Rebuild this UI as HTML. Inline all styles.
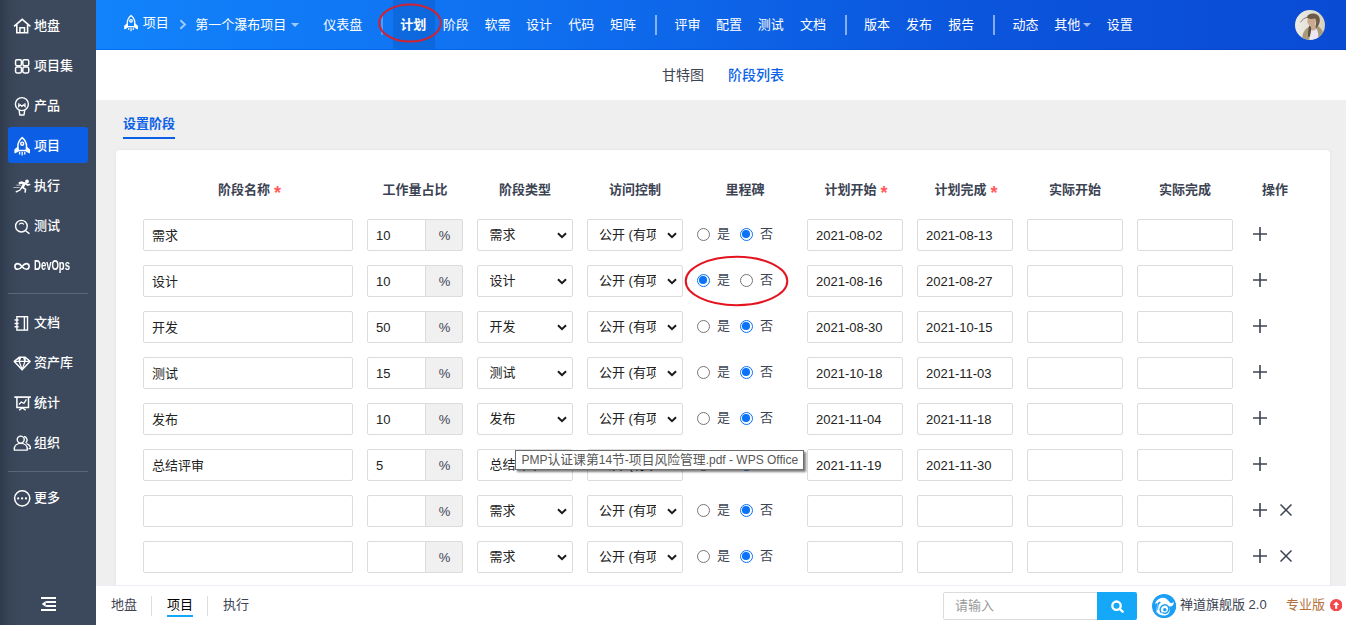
<!DOCTYPE html>
<html lang="zh-CN">
<head>
<meta charset="utf-8">
<title>设置阶段</title>
<style>
*{box-sizing:border-box;margin:0;padding:0}
html,body{width:1346px;height:625px;overflow:hidden;background:#efefef;font-family:"Liberation Sans","Noto Sans CJK SC",sans-serif;font-size:13px;color:#3c4353}
.abs{position:absolute}
#side{position:absolute;left:0;top:0;width:96px;height:625px;background:linear-gradient(90deg,#2f3a4c 0,#364256 7px,#3a475b 14px,#3c495d 22px,#3c495d 100%)}
.mi{position:absolute;left:8px;width:80px;height:36px;border-radius:3px;color:#fff;font-size:13px;line-height:38px;white-space:nowrap}
.mi svg{position:absolute;left:5px;top:9px;width:18px;height:20px}
.mi span{position:absolute;left:26px;top:0;font-weight:500}
.mi span.dv{font-size:14px;transform:scaleX(.68);transform-origin:0 50%;font-weight:bold;line-height:37px}
.mi.act{background:#0c5ee4}
.sdiv{position:absolute;left:8px;width:80px;height:1px;background:#5a6578}
#top{position:absolute;left:96px;top:0;width:1250px;height:50px;background:linear-gradient(90deg,#1283fb 0,#0f6fef 35%,#0b55dc 70%,#0a4bd4 100%)}
#top:after{content:"";position:absolute;left:0;bottom:0;width:100%;height:1px;background:linear-gradient(90deg,#0070f8 0,#0560e8 40%,#0540c8 100%)}
.ni{position:absolute;top:0;height:49px;line-height:49px;color:#fff;font-size:13px;white-space:nowrap}
.nd{position:absolute;top:15px;width:2px;height:20px;background:rgba(255,255,255,.5)}
.caret{position:absolute;top:23px;width:0;height:0;border:4px solid transparent;border-top-color:rgba(255,255,255,.6);border-bottom:none}
#sub{position:absolute;left:96px;top:50px;width:1250px;height:50px;background:#fff}
#sub span{position:absolute;top:0;line-height:50px;font-size:14px;white-space:nowrap}
.stitle{left:123px;top:114px;font-size:13px;font-weight:bold;color:#0b62e8;line-height:20px}
#panel{position:absolute;left:116px;top:150px;width:1214px;height:500px;background:#fff;border-radius:4px;box-shadow:0 0 3px rgba(0,0,0,.07)}
.th{position:absolute;top:30px;height:20px;line-height:20px;font-weight:bold;font-size:13px;color:#3c4353;text-align:center;white-space:nowrap;transform:translateX(-50%)}
.th i{color:#ff5d5d;font-style:normal;font-weight:bold;margin-left:4px;font-size:18px;line-height:0;position:relative;top:5px;font-family:"Liberation Sans",sans-serif}
.row{position:absolute;left:0;width:1214px;height:32px}
.in{position:absolute;top:0;height:32px;border:1px solid #dcdcdc;border-radius:2px;background:#fff;font-size:13px;line-height:32px;padding-left:8px;color:#222;white-space:nowrap;overflow:hidden}
.ad{position:absolute;top:0;left:309px;width:38px;height:32px;border:1px solid #dcdcdc;border-radius:0 2px 2px 0;background:#f0f0f0;text-align:center;line-height:32px;color:#3c4353;padding-left:1px}
.sel{line-height:30px!important}
.sel svg{position:absolute;right:5px;top:12px}
.clip{display:inline-block;width:57px;overflow:hidden;vertical-align:top;height:30px}
.rd{position:absolute;top:9px;width:13px;height:13px;border-radius:50%;border:1px solid #767676;background:#fff}
.rd.on{border:1.5px solid #0b73f8}
.rd.on:after{content:"";position:absolute;left:1.200px;top:1.200px;width:7.600px;height:7.600px;border-radius:50%;background:#0b73f8}
.rl{position:absolute;top:0;line-height:30px;font-size:13px;color:#3c4353}
.tip{left:515px;top:450px;width:289px;height:20px;border:1px solid #6e6e6e;background:#fff;box-shadow:2px 2px 2px rgba(0,0,0,.5);font-size:12px;line-height:17px;padding-left:5.500px;color:#575757;white-space:nowrap}
.tip b{font-weight:normal;font-size:12.800px}
#foot{position:absolute;left:96px;top:585px;width:1250px;height:40px;background:#fff;border-top:1px solid #eceef6}
.fi{position:absolute;top:0;line-height:38px;font-size:13px;color:#3c4353;white-space:nowrap}
.fd{position:absolute;top:10px;width:1px;height:20px;background:#ddd}
.sbox{left:847px;top:6px;width:155px;height:28px;border:1px solid #dcdcdc;border-radius:2px 0 0 2px;line-height:26px;padding-left:11px;color:#999;font-size:13px}
.sbtn{left:1001px;top:6px;width:40px;height:28px;background:#16a8f8;border-radius:0 2px 2px 0;display:flex;align-items:center;justify-content:center}
</style>
</head>
<body>
<div id="side">
<div class="mi" style="top:7px"><svg viewBox="0 0 18 20"><g fill="none" stroke="#fff" stroke-width="1.600" stroke-linejoin="miter"><path d="M1 10.400 9.200 3.400l8.200 7"/><path d="M3.800 8.600v8.100h10.800V8.600"/><path d="M6.900 16.700v-5h4.600v5" stroke-width="1.500"/></g></svg><span class="ml">地盘</span></div>
<div class="mi" style="top:47px"><svg viewBox="0 0 18 20"><g fill="none" stroke="#fff" stroke-width="1.500"><rect x="2.550" y="3.750" width="5.900" height="5.900" rx="1.400"/><rect x="9.850" y="3.750" width="5.900" height="5.900" rx="1.400"/><rect x="2.550" y="11.050" width="5.900" height="5.900" rx="1.400"/><rect x="9.850" y="11.050" width="5.900" height="5.900" rx="1.400"/></g></svg><span class="ml">项目集</span></div>
<div class="mi" style="top:87px"><svg viewBox="0 0 18 20"><g fill="none" stroke="#fff" stroke-width="1.400" stroke-linejoin="round"><circle cx="8.900" cy="8.100" r="6.500"/><path d="M6.100 14.200 6.800 19h4.200l.7-4.800"/><path d="M5.800 7.200v3.200l1.550-1.500 1.550 1.500 1.550-1.500 1.550 1.500V7.200" stroke-width="1.300" stroke-linejoin="miter"/></g></svg><span class="ml">产品</span></div>
<div class="mi act" style="top:127px"><svg viewBox="0 0 18 20"><g fill="none" stroke="#fff" stroke-width="1.500" stroke-linejoin="round"><path d="M9.200 1.600C6.400 4 4.900 6.800 4.900 10v4.400h8.600V10c0-3.200-1.500-6-4.300-8.400z"/><circle cx="9.200" cy="7.800" r="1.500" stroke-width="1.400"/><path d="M4.900 11.200 2 13.600v3.200l2.900-1.600zM13.500 11.200l2.900 2.400v3.200l-2.900-1.600z" fill="#fff" stroke-width="1.200"/><path d="M6.600 15.800v2.600M9.200 15.800v3.800M11.800 15.800v2.600" stroke-width="1.300"/></g></svg><span class="ml">项目</span></div>
<div class="mi" style="top:167px"><svg viewBox="0 0 18 20"><g fill="#fff" stroke="none"><circle cx="14" cy="5.500" r="1.900"/><path d="M5.600 6.200 8.400 5.300l4.200 1.200 2.200 1.600 2.300-.3.400 1.200-3 .9-2-1.300-1.600 2.700 2.500 1.700-.6 3.800-1.500-.2.400-3-2.600-1.300-1.600 2.300L3 16.700l-.5-1.400 4-1.600 3.100-5.400-1.500-.5-2.200 1z"/><path d="M3.200 8.800h5.200v.8H3.200zM.4 10.900h6.400v.8H.4z" opacity=".8"/></g></svg><span class="ml">执行</span></div>
<div class="mi" style="top:207px"><svg viewBox="0 0 18 20"><g fill="none" stroke="#fff" stroke-width="1.400" stroke-linecap="round"><circle cx="8.400" cy="10.200" r="5.800"/><path d="M12.600 14.800 16 17.400"/><path d="M6.400 8.100c1.200-1.100 3-1.100 4.200 0" stroke-width="1.100"/></g></svg><span class="ml">测试</span></div>
<div class="mi" style="top:247px"><svg viewBox="0 0 18 20"><path d="M9 10.400C7.400 8.400 6.200 7.600 4.700 7.600a2.800 2.800 0 0 0 0 5.600C6.200 13.200 7.400 12.400 9 10.400s2.800-2.800 4.300-2.800a2.800 2.800 0 0 1 0 5.600C11.800 13.200 10.600 12.400 9 10.400z" fill="none" stroke="#fff" stroke-width="1.600"/></svg><span class="ml dv">DevOps</span></div>
<div class="mi" style="top:304px"><svg viewBox="0 0 18 20"><g fill="none" stroke="#fff" stroke-width="1.400"><rect x="3.900" y="3.700" width="10.600" height="13.400"/><path d="M11.400 3.700v13.400"/><path d="M1.600 7h4M1.600 10.400h4M1.600 13.800h4" stroke-width="1.500"/></g></svg><span class="ml">文档</span></div>
<div class="mi" style="top:344px"><svg viewBox="0 0 18 20"><g fill="none" stroke="#fff" stroke-width="1.300" stroke-linejoin="round"><path d="M6.200 4.300h6L17 8.400 9.100 16.800 1.300 8.400z" stroke-width="1.500"/><path d="M1.300 8.400H17M6.200 8.400 9.100 16.600 12 8.400M6.200 8.400 7.600 4.300M12 8.400 10.600 4.300M6.200 8.400 6.200 4.300M12 8.400 12.200 4.300"/></g></svg><span class="ml">资产库</span></div>
<div class="mi" style="top:384px"><svg viewBox="0 0 18 20"><g fill="none" stroke="#fff" stroke-width="1.500" stroke-linejoin="miter"><path d="M1.300 4.100h16.600" stroke-width="1.700"/><path d="M3.900 4.100v10.300h11.600V4.100"/><path d="M6.200 17.200 9.300 14.600l3.400 2.600" stroke-width="1.400"/><path d="M6 11.500 8.300 9l2.600 1.300 2.500-4" stroke-width="1.300"/></g></svg><span class="ml">统计</span></div>
<div class="mi" style="top:424px"><svg viewBox="0 0 18 20"><g fill="none" stroke="#fff" stroke-width="1.400"><circle cx="7.700" cy="6.600" r="3.500"/><path d="M1.300 17.100v-1c0-3.400 2.600-5.700 6.500-5.700s6.500 2.300 6.500 5.700v1z" stroke-linejoin="round"/><path d="M11 3.500a3.500 3.500 0 0 1 1.600 6.300M13.300 10.600c2.600.8 4.200 2.600 4.200 5h-2"/></g></svg><span class="ml">组织</span></div>
<div class="mi" style="top:479px"><svg viewBox="0 0 18 20"><g><circle cx="9.200" cy="10.300" r="7.600" fill="none" stroke="#fff" stroke-width="1.500"/><circle cx="5.200" cy="10.400" r="1.150" fill="#fff"/><circle cx="9.100" cy="10.400" r="1.150" fill="#fff"/><circle cx="13" cy="10.400" r="1.150" fill="#fff"/></g></svg><span class="ml">更多</span></div>
<div class="sdiv" style="top:293px"></div><div class="sdiv" style="top:471px"></div>
<svg class="abs" style="left:40.500px;top:597.100px" width="15.200" height="14" viewBox="0 0 16 14" preserveAspectRatio="none"><path d="M0 0h16v1.900H0zM5.400 4h10.600v1.900H5.400zM5.400 8h10.600v1.900H5.400zM0 12h16v1.900H0z" fill="#fff"/><path d="M5 4v6L.8 7z" fill="#fff"/></svg>
</div>
<div id="top">
<svg class="abs" style="left:27.300px;top:14.100px" width="15.750" height="17.500" viewBox="0 0 18 20"><g fill="none" stroke="#fff" stroke-width="1.500" stroke-linejoin="round"><path d="M9.200 1.600C6.400 4 4.900 6.800 4.900 10v4.400h8.600V10c0-3.200-1.500-6-4.300-8.400z"/><circle cx="9.200" cy="7.800" r="1.500" stroke-width="1.400"/><path d="M4.900 11.200 2 13.600v3.200l2.900-1.600zM13.500 11.200l2.900 2.400v3.200l-2.900-1.600z" fill="#fff" stroke-width="1.200"/><path d="M6.600 15.800v2.600M9.200 15.800v3.800M11.800 15.800v2.600" stroke-width="1.300"/></g></svg>
<span class="ni" style="left:46.69999999999999px;line-height:46px">项目</span>
<svg class="abs" style="left:83px;top:18.800px" width="8" height="11" viewBox="0 0 8 11"><path d="M1.400 1.200l4.600 4.300-4.600 4.300" fill="none" stroke="rgba(255,255,255,.6)" stroke-width="1.900"/></svg>
<span class="ni" style="left:99.30000000000001px">第一个瀑布项目</span>
<span class="caret" style="left:195px"></span>
<span class="ni" style="left:227.3px">仪表盘</span>
<span class="nd" style="left:284.500px;opacity:.55"></span>
<div class="abs" style="left:297px;top:0;width:41.500px;height:50px;background:rgba(0,0,40,.1)"></div>
<span class="ni" style="left:304.2px;font-weight:bold">计划</span>
<span class="ni" style="left:346.7px">阶段</span>
<span class="ni" style="left:388.4px">软需</span>
<span class="ni" style="left:430.1px">设计</span>
<span class="ni" style="left:472.20000000000005px">代码</span>
<span class="ni" style="left:513.9px">矩阵</span>
<span class="ni" style="left:578.4px">评审</span>
<span class="ni" style="left:620.1px">配置</span>
<span class="ni" style="left:661.8px">测试</span>
<span class="ni" style="left:703.9px">文档</span>
<span class="ni" style="left:768.1px">版本</span>
<span class="ni" style="left:809.9px">发布</span>
<span class="ni" style="left:852.3px">报告</span>
<span class="ni" style="left:916.6px">动态</span>
<span class="ni" style="left:958.3px">其他</span>
<span class="ni" style="left:1010.8px">设置</span>
<span class="caret" style="left:986.500px"></span>
<span class="nd" style="left:559px"></span>
<span class="nd" style="left:749px"></span>
<span class="nd" style="left:897px"></span>
<svg class="abs" style="left:1199px;top:9.800px" width="30" height="30" viewBox="0 0 30 30"><defs><clipPath id="av"><circle cx="15" cy="15" r="15"/></clipPath><linearGradient id="avg" x1="0" x2="1" y1="0" y2="0"><stop offset="0" stop-color="#ecece4"/><stop offset=".55" stop-color="#e2e1d8"/><stop offset="1" stop-color="#d8cfbc"/></linearGradient><filter id="avb" x="-10%" y="-10%" width="120%" height="120%"><feGaussianBlur stdDeviation=".55"/></filter></defs><g clip-path="url(#av)"><rect width="30" height="30" fill="url(#avg)"/><g filter="url(#avb)"><path d="M7 30c0-6 2.500-11 6.500-13l4-1.500 5 .5c4 1.500 6.500 6 6.500 14z" fill="#a99b7a"/><path d="M14.500 19.500c1.500-1.500 5.500-2 7.500 0 1.500 3 1.500 7 1 10.500h-8.500c-.5-4-.5-8 0-10.500z" fill="#ece7f3"/><path d="M15.500 14.500h4.500l.5 5c-1.500 1.200-3.500 1.200-5 0z" fill="#c9a98f"/><path d="M12.500 9c.5-3 3.500-4.500 6.500-4 2 .5 2.500 3 2 6-.5 3-2 5-4.500 5-2.500-.2-3.800-2-4.200-4.200z" fill="#caa98e"/><path d="M11.800 7.500C12.500 4.500 16 3 20 3.800c3.500.8 5 3.500 4.800 7-.2 3-1.500 5.500-3.300 7.200-.8-1-1-2.500-.6-4 .6-2.200.4-4.200-.9-5.700-1.700 1.200-5 1.200-8.200-.8z" fill="#6a5a48"/><path d="M14.200 15.500c1 .8 2 1.500 2 3 0 3-1 6-1.400 8.500l-1.800-.5c0-3.500.2-7.500 1.200-11z" fill="#5e5040"/><path d="M12.200 7.300C9.500 7.800 7 9.800 5.600 12.300" fill="none" stroke="#5a5048" stroke-width=".7"/></g></g></svg>
<svg class="abs" style="left:282px;top:0px;overflow:visible" width="66" height="44" viewBox="0 0 66 44"><ellipse cx="32" cy="23" rx="30.800" ry="18.500" fill="none" stroke="#d3222f" stroke-width="2"/></svg>
</div>
<div id="sub"><span style="left:566px;color:#3c4353">甘特图</span><span style="left:632px;color:#0b62e8;font-weight:500">阶段列表</span></div>
<div class="abs stitle">设置阶段</div>
<div class="abs" style="left:123px;top:137px;width:52px;height:2px;background:#0b5fe6"></div>
<div id="panel">
<div class="th" style="left:133.5px">阶段名称<i>*</i></div><div class="th" style="left:299px">工作量占比</div><div class="th" style="left:409px">阶段类型</div><div class="th" style="left:519px">访问控制</div><div class="th" style="left:629px">里程碑</div><div class="th" style="left:740px">计划开始<i>*</i></div><div class="th" style="left:850px">计划完成<i>*</i></div><div class="th" style="left:959px">实际开始</div><div class="th" style="left:1069px">实际完成</div><div class="th" style="left:1159px">操作</div>
<div class="row" style="top:69px"><div class="in" style="left:27px;width:210px">需求</div><div class="in" style="left:251px;width:59px;border-radius:2px 0 0 2px">10</div><div class="ad">%</div><div class="in sel" style="left:361px;width:96px;padding-left:11.500px">需求<svg width="10" height="7" viewBox="0 0 10 7"><path d="M1 1.200l4 4 4-4" fill="none" stroke="#1a1a1a" stroke-width="2"/></svg></div><div class="in sel" style="left:471px;width:96px;padding-left:11px"><span class="clip">公开 (有项目视图权限即可访问)</span><svg width="10" height="7" viewBox="0 0 10 7"><path d="M1 1.200l4 4 4-4" fill="none" stroke="#1a1a1a" stroke-width="2"/></svg></div><span class="rd " style="left:581px"></span><span class="rl" style="left:601px">是</span><span class="rd on" style="left:624px"></span><span class="rl" style="left:644px">否</span><div class="in" style="left:691px;width:96px">2021-08-02</div><div class="in" style="left:801px;width:96px">2021-08-13</div><div class="in" style="left:911px;width:96px"></div><div class="in" style="left:1021px;width:96px"></div><svg class="abs" style="left:1137px;top:8px" width="14" height="14" viewBox="0 0 14 14"><path d="M7 0v14M0 7h14" stroke="#3c4353" stroke-width="1.600"/></svg></div>
<div class="row" style="top:115px"><div class="in" style="left:27px;width:210px">设计</div><div class="in" style="left:251px;width:59px;border-radius:2px 0 0 2px">10</div><div class="ad">%</div><div class="in sel" style="left:361px;width:96px;padding-left:11.500px">设计<svg width="10" height="7" viewBox="0 0 10 7"><path d="M1 1.200l4 4 4-4" fill="none" stroke="#1a1a1a" stroke-width="2"/></svg></div><div class="in sel" style="left:471px;width:96px;padding-left:11px"><span class="clip">公开 (有项目视图权限即可访问)</span><svg width="10" height="7" viewBox="0 0 10 7"><path d="M1 1.200l4 4 4-4" fill="none" stroke="#1a1a1a" stroke-width="2"/></svg></div><span class="rd on" style="left:581px"></span><span class="rl" style="left:601px">是</span><span class="rd " style="left:624px"></span><span class="rl" style="left:644px">否</span><div class="in" style="left:691px;width:96px">2021-08-16</div><div class="in" style="left:801px;width:96px">2021-08-27</div><div class="in" style="left:911px;width:96px"></div><div class="in" style="left:1021px;width:96px"></div><svg class="abs" style="left:1137px;top:8px" width="14" height="14" viewBox="0 0 14 14"><path d="M7 0v14M0 7h14" stroke="#3c4353" stroke-width="1.600"/></svg></div>
<div class="row" style="top:161px"><div class="in" style="left:27px;width:210px">开发</div><div class="in" style="left:251px;width:59px;border-radius:2px 0 0 2px">50</div><div class="ad">%</div><div class="in sel" style="left:361px;width:96px;padding-left:11.500px">开发<svg width="10" height="7" viewBox="0 0 10 7"><path d="M1 1.200l4 4 4-4" fill="none" stroke="#1a1a1a" stroke-width="2"/></svg></div><div class="in sel" style="left:471px;width:96px;padding-left:11px"><span class="clip">公开 (有项目视图权限即可访问)</span><svg width="10" height="7" viewBox="0 0 10 7"><path d="M1 1.200l4 4 4-4" fill="none" stroke="#1a1a1a" stroke-width="2"/></svg></div><span class="rd " style="left:581px"></span><span class="rl" style="left:601px">是</span><span class="rd on" style="left:624px"></span><span class="rl" style="left:644px">否</span><div class="in" style="left:691px;width:96px">2021-08-30</div><div class="in" style="left:801px;width:96px">2021-10-15</div><div class="in" style="left:911px;width:96px"></div><div class="in" style="left:1021px;width:96px"></div><svg class="abs" style="left:1137px;top:8px" width="14" height="14" viewBox="0 0 14 14"><path d="M7 0v14M0 7h14" stroke="#3c4353" stroke-width="1.600"/></svg></div>
<div class="row" style="top:207px"><div class="in" style="left:27px;width:210px">测试</div><div class="in" style="left:251px;width:59px;border-radius:2px 0 0 2px">15</div><div class="ad">%</div><div class="in sel" style="left:361px;width:96px;padding-left:11.500px">测试<svg width="10" height="7" viewBox="0 0 10 7"><path d="M1 1.200l4 4 4-4" fill="none" stroke="#1a1a1a" stroke-width="2"/></svg></div><div class="in sel" style="left:471px;width:96px;padding-left:11px"><span class="clip">公开 (有项目视图权限即可访问)</span><svg width="10" height="7" viewBox="0 0 10 7"><path d="M1 1.200l4 4 4-4" fill="none" stroke="#1a1a1a" stroke-width="2"/></svg></div><span class="rd " style="left:581px"></span><span class="rl" style="left:601px">是</span><span class="rd on" style="left:624px"></span><span class="rl" style="left:644px">否</span><div class="in" style="left:691px;width:96px">2021-10-18</div><div class="in" style="left:801px;width:96px">2021-11-03</div><div class="in" style="left:911px;width:96px"></div><div class="in" style="left:1021px;width:96px"></div><svg class="abs" style="left:1137px;top:8px" width="14" height="14" viewBox="0 0 14 14"><path d="M7 0v14M0 7h14" stroke="#3c4353" stroke-width="1.600"/></svg></div>
<div class="row" style="top:253px"><div class="in" style="left:27px;width:210px">发布</div><div class="in" style="left:251px;width:59px;border-radius:2px 0 0 2px">10</div><div class="ad">%</div><div class="in sel" style="left:361px;width:96px;padding-left:11.500px">发布<svg width="10" height="7" viewBox="0 0 10 7"><path d="M1 1.200l4 4 4-4" fill="none" stroke="#1a1a1a" stroke-width="2"/></svg></div><div class="in sel" style="left:471px;width:96px;padding-left:11px"><span class="clip">公开 (有项目视图权限即可访问)</span><svg width="10" height="7" viewBox="0 0 10 7"><path d="M1 1.200l4 4 4-4" fill="none" stroke="#1a1a1a" stroke-width="2"/></svg></div><span class="rd " style="left:581px"></span><span class="rl" style="left:601px">是</span><span class="rd on" style="left:624px"></span><span class="rl" style="left:644px">否</span><div class="in" style="left:691px;width:96px">2021-11-04</div><div class="in" style="left:801px;width:96px">2021-11-18</div><div class="in" style="left:911px;width:96px"></div><div class="in" style="left:1021px;width:96px"></div><svg class="abs" style="left:1137px;top:8px" width="14" height="14" viewBox="0 0 14 14"><path d="M7 0v14M0 7h14" stroke="#3c4353" stroke-width="1.600"/></svg></div>
<div class="row" style="top:299px"><div class="in" style="left:27px;width:210px">总结评审</div><div class="in" style="left:251px;width:59px;border-radius:2px 0 0 2px">5</div><div class="ad">%</div><div class="in sel" style="left:361px;width:96px;padding-left:11.500px">总结评审<svg width="10" height="7" viewBox="0 0 10 7"><path d="M1 1.200l4 4 4-4" fill="none" stroke="#1a1a1a" stroke-width="2"/></svg></div><div class="in sel" style="left:471px;width:96px;padding-left:11px"><span class="clip">公开 (有项目视图权限即可访问)</span><svg width="10" height="7" viewBox="0 0 10 7"><path d="M1 1.200l4 4 4-4" fill="none" stroke="#1a1a1a" stroke-width="2"/></svg></div><span class="rd " style="left:581px"></span><span class="rl" style="left:601px">是</span><span class="rd on" style="left:624px"></span><span class="rl" style="left:644px">否</span><div class="in" style="left:691px;width:96px">2021-11-19</div><div class="in" style="left:801px;width:96px">2021-11-30</div><div class="in" style="left:911px;width:96px"></div><div class="in" style="left:1021px;width:96px"></div><svg class="abs" style="left:1137px;top:8px" width="14" height="14" viewBox="0 0 14 14"><path d="M7 0v14M0 7h14" stroke="#3c4353" stroke-width="1.600"/></svg></div>
<div class="row" style="top:345px"><div class="in" style="left:27px;width:210px"></div><div class="in" style="left:251px;width:59px;border-radius:2px 0 0 2px"></div><div class="ad">%</div><div class="in sel" style="left:361px;width:96px;padding-left:11.500px">需求<svg width="10" height="7" viewBox="0 0 10 7"><path d="M1 1.200l4 4 4-4" fill="none" stroke="#1a1a1a" stroke-width="2"/></svg></div><div class="in sel" style="left:471px;width:96px;padding-left:11px"><span class="clip">公开 (有项目视图权限即可访问)</span><svg width="10" height="7" viewBox="0 0 10 7"><path d="M1 1.200l4 4 4-4" fill="none" stroke="#1a1a1a" stroke-width="2"/></svg></div><span class="rd " style="left:581px"></span><span class="rl" style="left:601px">是</span><span class="rd on" style="left:624px"></span><span class="rl" style="left:644px">否</span><div class="in" style="left:691px;width:96px"></div><div class="in" style="left:801px;width:96px"></div><div class="in" style="left:911px;width:96px"></div><div class="in" style="left:1021px;width:96px"></div><svg class="abs" style="left:1137px;top:8px" width="14" height="14" viewBox="0 0 14 14"><path d="M7 0v14M0 7h14" stroke="#3c4353" stroke-width="1.600"/></svg><svg class="abs" style="left:1164px;top:9px" width="12" height="12" viewBox="0 0 12 12"><path d="M.500 .500l11 11M11.500 .500l-11 11" stroke="#3c4353" stroke-width="1.500"/></svg></div>
<div class="row" style="top:391px"><div class="in" style="left:27px;width:210px"></div><div class="in" style="left:251px;width:59px;border-radius:2px 0 0 2px"></div><div class="ad">%</div><div class="in sel" style="left:361px;width:96px;padding-left:11.500px">需求<svg width="10" height="7" viewBox="0 0 10 7"><path d="M1 1.200l4 4 4-4" fill="none" stroke="#1a1a1a" stroke-width="2"/></svg></div><div class="in sel" style="left:471px;width:96px;padding-left:11px"><span class="clip">公开 (有项目视图权限即可访问)</span><svg width="10" height="7" viewBox="0 0 10 7"><path d="M1 1.200l4 4 4-4" fill="none" stroke="#1a1a1a" stroke-width="2"/></svg></div><span class="rd " style="left:581px"></span><span class="rl" style="left:601px">是</span><span class="rd on" style="left:624px"></span><span class="rl" style="left:644px">否</span><div class="in" style="left:691px;width:96px"></div><div class="in" style="left:801px;width:96px"></div><div class="in" style="left:911px;width:96px"></div><div class="in" style="left:1021px;width:96px"></div><svg class="abs" style="left:1137px;top:8px" width="14" height="14" viewBox="0 0 14 14"><path d="M7 0v14M0 7h14" stroke="#3c4353" stroke-width="1.600"/></svg><svg class="abs" style="left:1164px;top:9px" width="12" height="12" viewBox="0 0 12 12"><path d="M.500 .500l11 11M11.500 .500l-11 11" stroke="#3c4353" stroke-width="1.500"/></svg></div>
<svg class="abs" style="left:569px;top:104px;overflow:visible" width="104" height="54" viewBox="0 0 104 54"><ellipse cx="51.500" cy="27" rx="50.800" ry="24.200" fill="none" stroke="#e3131f" stroke-width="2"/></svg>
</div>
<div class="abs tip">PMP<b>认证课第</b>14<b>节</b>-<b>项目风险管理</b>.pdf - WPS Office</div>
<div id="foot">
<span class="fi" style="left:15px">地盘</span><span class="fd" style="left:55px"></span>
<span class="fi" style="left:71px;color:#000">项目</span><span class="abs" style="left:71px;top:29px;width:26px;height:2px;background:#16a8f8"></span><span class="fd" style="left:111px"></span>
<span class="fi" style="left:127px">执行</span>
<div class="abs sbox"><span>请输入</span></div>
<div class="abs sbtn"><svg width="14" height="14" viewBox="0 0 14 14"><circle cx="6.500" cy="6.700" r="4.200" fill="none" stroke="#fff" stroke-width="2.300"/><path d="M9.800 10l2.800 2.700" stroke="#fff" stroke-width="2.400" stroke-linecap="round"/></svg></div>
<svg class="abs" style="left:1056.200px;top:8.100px" width="24.200" height="24.200" viewBox="-0.100 -0.100 24.200 24.200"><circle cx="12" cy="12" r="12.100" fill="#1a9ff5"/><path d="M2.800 10C4 5.800 7.600 3.400 11.400 3.600c3.200.2 4.800 2.800 6.400 4.700 1.200 1.300 2.900.8 3.700-1 .5 2.600-.6 4.600-2.900 5-1 .2-1.800 0-2.500-.3 2.100 2 2.400 5.200.6 7.400-2 2.400-6.200 2.700-9.200.9-1.900-1.100-3-2.400-3.300-3 .6-1.400.4-3.400.5-4.600.1-1.500.5-2.900 1-3.900-.9.100-1.900.500-2.900 1.200z" fill="#fff"/><path d="M6.500 7.900c.9-.6 2-.4 2.200.5-1.400 1.200-2.100 2.400-2.400 4-.3 1.400-.1 3-.5 4.200-1-2.100-1.100-6.300.7-8.700z" fill="#1a9ff5"/><path d="M8.900 18.300C6.900 15.300 8.500 11.200 12.200 10.800c3.400-.3 5.600 3 4.200 6-1 2.100-3.500 2.900-5.500 2" fill="none" stroke="#1a9ff5" stroke-width="1.500" stroke-linecap="round"/><circle cx="12.700" cy="15.700" r="1.700" fill="#1a9ff5"/></svg>
<span class="fi" style="left:1084px;color:#3c4353;font-size:13px">禅道旗舰版 2.0</span>
<span class="fi" style="left:1190px;color:#b5713c;font-size:13px">专业版</span>
<svg class="abs" style="left:1234px;top:13px" width="12.400" height="12.400" viewBox="0 0 13 13"><circle cx="6.500" cy="6.500" r="6.500" fill="#f2474b"/><path d="M6.500 2.600 3.200 6.400h2.200v3.800h2.200V6.400h2.200z" fill="#fff"/></svg>
</div>
</body>
</html>
